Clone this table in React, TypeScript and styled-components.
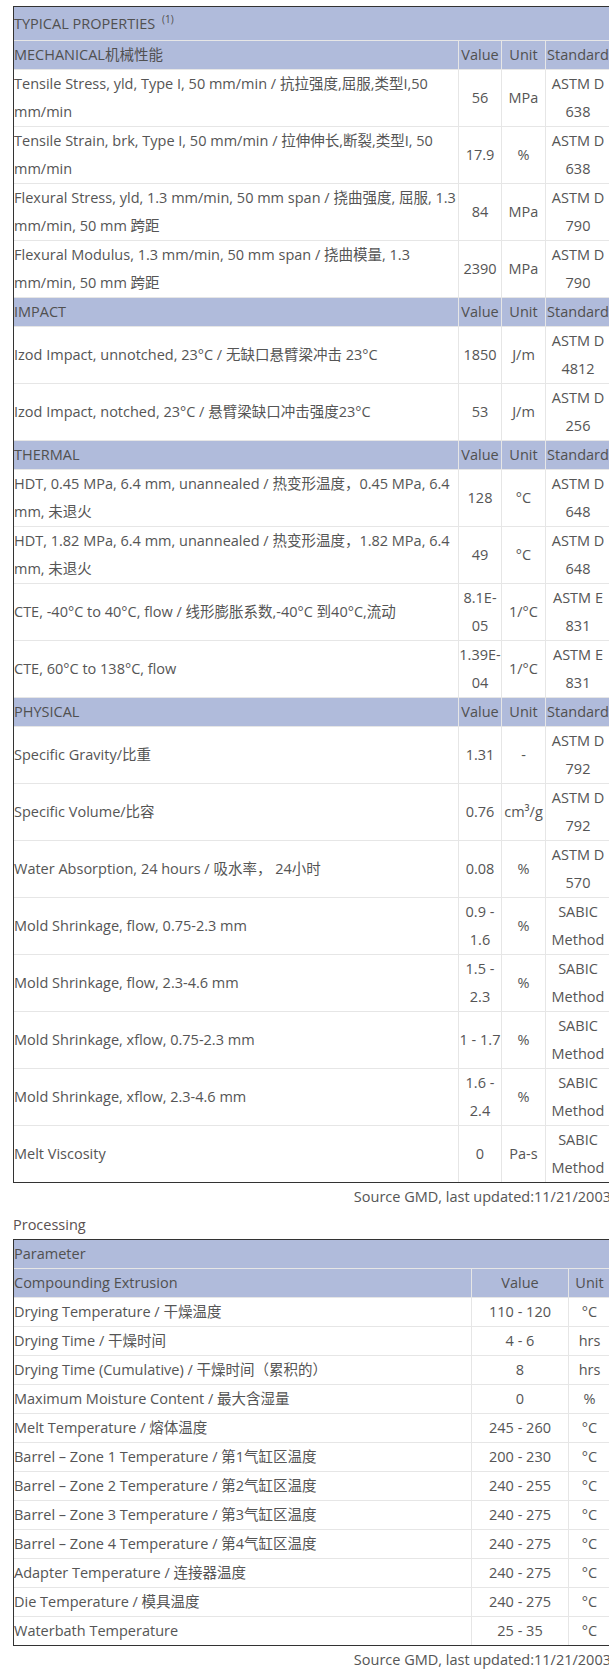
import React from "react";
import styled, { createGlobalStyle } from "styled-components";

const GlobalStyle = createGlobalStyle`
  html, body {
    margin: 0;
    padding: 0;
    background: #ffffff;
    overflow-x: hidden;
  }
`;

const FONT = `"Open Sans", "Noto Sans CJK SC", sans-serif`;

const Page = styled.div`
  width: 598px;
  padding: 6px 0 0 13px;
  font-family: ${FONT};
  font-size: 14.5px;
  line-height: 28px;
  color: #555555;
`;

const Table = styled.table`
  width: 598px;
  border-collapse: separate;
  border-spacing: 0;
  table-layout: fixed;
  border: 1px solid #333333;
`;

const Col = styled.col<{ $w: number }>`
  width: ${(p) => p.$w}px;
`;

const Row = styled.tr`
  &:last-child > td {
    border-bottom: none;
  }
`;

const Cell = styled.td<{ $align?: "left" | "center" }>`
  padding: 0;
  border-right: 1px solid #e6e6e6;
  border-bottom: 1px solid #e6e6e6;
  text-align: ${(p) => p.$align ?? "left"};
  vertical-align: middle;
  &:last-child {
    border-right: none;
  }
`;

const HeadCell = styled(Cell)<{ $tall?: boolean }>`
  background: #b0bbdb;
  color: #505050;
  white-space: nowrap;
  height: ${(p) => (p.$tall ? "33px" : "auto")};
`;

const Sup = styled.sup`
  font-size: 10px;
  line-height: 0;
  vertical-align: 6px;
  margin-left: 3px;
`;

const Note = styled.div`
  text-align: right;
  white-space: nowrap;
  color: #555555;
`;

const Caption = styled.div`
  color: #5a5050;
`;

type Prop = { name: string; value: string; unit: string; std: string };
type Section = { title: string; rows: Prop[] };

const sections: Section[] = [
  {
    title: "MECHANICAL机械性能",
    rows: [
      { name: "Tensile Stress, yld, Type I, 50 mm/min / 抗拉强度,屈服,类型I,50 mm/min", value: "56", unit: "MPa", std: "ASTM D 638" },
      { name: "Tensile Strain, brk, Type I, 50 mm/min / 拉伸伸长,断裂,类型I, 50 mm/min", value: "17.9", unit: "%", std: "ASTM D 638" },
      { name: "Flexural Stress, yld, 1.3 mm/min, 50 mm span / 挠曲强度, 屈服, 1.3 mm/min, 50 mm 跨距", value: "84", unit: "MPa", std: "ASTM D 790" },
      { name: "Flexural Modulus, 1.3 mm/min, 50 mm span / 挠曲模量, 1.3 mm/min, 50 mm 跨距", value: "2390", unit: "MPa", std: "ASTM D 790" },
    ],
  },
  {
    title: "IMPACT",
    rows: [
      { name: "Izod Impact, unnotched, 23°C / 无缺口悬臂梁冲击 23°C", value: "1850", unit: "J/m", std: "ASTM D 4812" },
      { name: "Izod Impact, notched, 23°C / 悬臂梁缺口冲击强度23°C", value: "53", unit: "J/m", std: "ASTM D 256" },
    ],
  },
  {
    title: "THERMAL",
    rows: [
      { name: "HDT, 0.45 MPa, 6.4 mm, unannealed / 热变形温度，0.45 MPa, 6.4 mm, 未退火", value: "128", unit: "°C", std: "ASTM D 648" },
      { name: "HDT, 1.82 MPa, 6.4 mm, unannealed / 热变形温度，1.82 MPa, 6.4 mm, 未退火", value: "49", unit: "°C", std: "ASTM D 648" },
      { name: "CTE, -40°C to 40°C, flow / 线形膨胀系数,-40°C 到40°C,流动", value: "8.1E-05", unit: "1/°C", std: "ASTM E 831" },
      { name: "CTE, 60°C to 138°C, flow", value: "1.39E-04", unit: "1/°C", std: "ASTM E 831" },
    ],
  },
  {
    title: "PHYSICAL",
    rows: [
      { name: "Specific Gravity/比重", value: "1.31", unit: "-", std: "ASTM D 792" },
      { name: "Specific Volume/比容", value: "0.76", unit: "cm³/g", std: "ASTM D 792" },
      { name: "Water Absorption, 24 hours / 吸水率， 24小时", value: "0.08", unit: "%", std: "ASTM D 570" },
      { name: "Mold Shrinkage, flow, 0.75-2.3 mm", value: "0.9 - 1.6", unit: "%", std: "SABIC Method" },
      { name: "Mold Shrinkage, flow, 2.3-4.6 mm", value: "1.5 - 2.3", unit: "%", std: "SABIC Method" },
      { name: "Mold Shrinkage, xflow, 0.75-2.3 mm", value: "1 - 1.7", unit: "%", std: "SABIC Method" },
      { name: "Mold Shrinkage, xflow, 2.3-4.6 mm", value: "1.6 - 2.4", unit: "%", std: "SABIC Method" },
      { name: "Melt Viscosity", value: "0", unit: "Pa-s", std: "SABIC Method" },
    ],
  },
];

type Param = { name: string; value: string; unit: string };

const processing: Param[] = [
  { name: "Drying Temperature / 干燥温度", value: "110 - 120", unit: "°C" },
  { name: "Drying Time / 干燥时间", value: "4 - 6", unit: "hrs" },
  { name: "Drying Time (Cumulative) / 干燥时间（累积的）", value: "8", unit: "hrs" },
  { name: "Maximum Moisture Content / 最大含湿量", value: "0", unit: "%" },
  { name: "Melt Temperature / 熔体温度", value: "245 - 260", unit: "°C" },
  { name: "Barrel – Zone 1 Temperature / 第1气缸区温度", value: "200 - 230", unit: "°C" },
  { name: "Barrel – Zone 2 Temperature / 第2气缸区温度", value: "240 - 255", unit: "°C" },
  { name: "Barrel – Zone 3 Temperature / 第3气缸区温度", value: "240 - 275", unit: "°C" },
  { name: "Barrel – Zone 4 Temperature / 第4气缸区温度", value: "240 - 275", unit: "°C" },
  { name: "Adapter Temperature / 连接器温度", value: "240 - 275", unit: "°C" },
  { name: "Die Temperature / 模具温度", value: "240 - 275", unit: "°C" },
  { name: "Waterbath Temperature", value: "25 - 35", unit: "°C" },
];

export default function App() {
  return (
    <>
      <GlobalStyle />
      <Page>
        <Table>
          <colgroup>
            <Col $w={445} />
            <Col $w={43} />
            <Col $w={44} />
            <Col $w={64} />
          </colgroup>
          <tbody>
            <Row>
              <HeadCell colSpan={4} $tall>
                TYPICAL PROPERTIES <Sup>(1)</Sup>
              </HeadCell>
            </Row>
            {sections.map((s) => (
              <React.Fragment key={s.title}>
                <Row>
                  <HeadCell>{s.title}</HeadCell>
                  <HeadCell $align="center">Value</HeadCell>
                  <HeadCell $align="center">Unit</HeadCell>
                  <HeadCell $align="center">Standard</HeadCell>
                </Row>
                {s.rows.map((r) => (
                  <Row key={r.name}>
                    <Cell>{r.name}</Cell>
                    <Cell $align="center">{r.value}</Cell>
                    <Cell $align="center">{r.unit}</Cell>
                    <Cell $align="center">{r.std}</Cell>
                  </Row>
                ))}
              </React.Fragment>
            ))}
          </tbody>
        </Table>
        <Note>Source GMD, last updated:11/21/2003</Note>
        <Caption>Processing</Caption>
        <Table>
          <colgroup>
            <Col $w={458} />
            <Col $w={97} />
            <Col $w={41} />
          </colgroup>
          <tbody>
            <Row>
              <HeadCell colSpan={3}>Parameter</HeadCell>
            </Row>
            <Row>
              <HeadCell>Compounding Extrusion</HeadCell>
              <HeadCell $align="center">Value</HeadCell>
              <HeadCell $align="center">Unit</HeadCell>
            </Row>
            {processing.map((p) => (
              <Row key={p.name}>
                <Cell>{p.name}</Cell>
                <Cell $align="center">{p.value}</Cell>
                <Cell $align="center">{p.unit}</Cell>
              </Row>
            ))}
          </tbody>
        </Table>
        <Note>Source GMD, last updated:11/21/2003</Note>
      </Page>
    </>
  );
}
